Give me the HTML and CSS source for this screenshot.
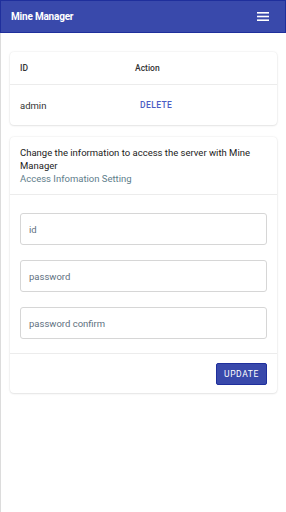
FILE: index.html
```html
<!DOCTYPE html>
<html>
<head>
<meta charset="utf-8">
<link rel="stylesheet" href="styles.css">
</head>
<body>
<header class="topbar">
  <span class="brand">Mine Manager</span>
  <svg class="menu" width="12" height="9" viewBox="0 0 12 9"><rect x="0" y="0" width="12" height="1.6" fill="#fff"/><rect x="0" y="3.7" width="12" height="1.6" fill="#fff"/><rect x="0" y="7.4" width="12" height="1.6" fill="#fff"/></svg>
</header>
<main class="content">
  <section class="card">
    <div class="row head">
      <span class="col1">ID</span>
      <span class="col2">Action</span>
    </div>
    <div class="row data">
      <span class="col1">admin</span>
      <span class="col2 link">DELETE</span>
    </div>
  </section>
  <section class="card">
    <div class="card-head">
      <div class="title">Change the information to access the server with Mine Manager</div>
      <div class="sub">Access Infomation Setting</div>
    </div>
    <div class="card-body">
      <div class="field">id</div>
      <div class="field">password</div>
      <div class="field">password confirm</div>
    </div>
    <div class="card-foot">
      <button class="btn">UPDATE</button>
    </div>
  </section>
</main>
</body>
</html>
```
FILE: styles.css
```css
html, body { margin: 0; padding: 0; height: 100%; }
body { font-family: Roboto, "Noto Sans", sans-serif; background: #fff; color: #222; display: flex; flex-direction: column; }
.topbar { height: 31px; background: #3949ab; border: 1px solid #1f2f9c; display: flex; align-items: center; justify-content: space-between; padding: 0 16px 0 10px; flex-shrink: 0; }
.brand { color: #fff; font-weight: 700; font-size: 10px; font-family: Roboto, sans-serif; letter-spacing: -0.2px; }
.menu { display: block; }
.content { flex: 1; border-left: 1px solid #dcdcdc; padding: 19px 9px 0 9px; display: flex; flex-direction: column; gap: 12px; }
.card { background: #fff; border-radius: 4px; box-shadow: 0 0 2px rgba(0,0,0,0.12), 0 1px 2px rgba(0,0,0,0.08); }
.row { display: flex; align-items: center; padding: 0 10px; font-size: 9.5px; }
.row.head { height: 32px; border-bottom: 1px solid #ececec; font-size: 8.5px; font-weight: 500; color: #333; }
.row.data { height: 40px; color: #333; }
.col1 { width: 115px; }
.row.data .col2 { padding-left: 5px; }
.link { color: #4a5cc4; font-weight: 500; font-size: 8.5px; letter-spacing: 0.4px; }
.card-head { padding: 9px 10px 8px; border-bottom: 1px solid #ececec; }
.title { font-size: 9.5px; line-height: 13px; color: #222; }
.sub { font-size: 9.5px; line-height: 14px; color: #607d8b; }
.card-body { padding: 18px 10px 14px; display: flex; flex-direction: column; gap: 15px; border-bottom: 1px solid #ececec; }
.field { height: 30px; border: 1px solid #d6d6d6; border-radius: 3px; display: flex; align-items: center; padding-left: 8px; font-size: 9.5px; color: #607080; }
.card-foot { display: flex; justify-content: flex-end; padding: 9px 10px 8px; }
.btn { font-family: Roboto, sans-serif; background: #3949ab; color: #fff; border: 1px solid #1f2f9c; border-radius: 2px; height: 22px; width: 51px; font-size: 8.5px; font-weight: 400; letter-spacing: 0.6px; padding: 0; }
```
